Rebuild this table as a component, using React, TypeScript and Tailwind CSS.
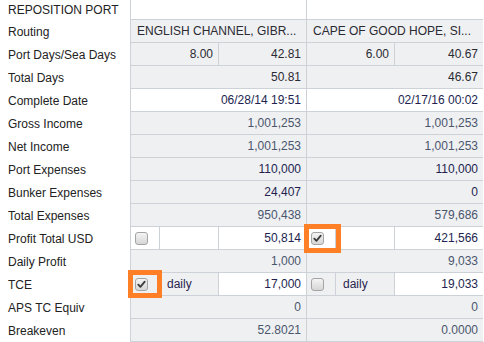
import React from 'react'

type Tone = 'dark' | 'calc' | 'edit'

const toneClass: Record<Tone, string> = {
  dark: 'text-[#2b2b33]',
  calc: 'text-[#4a566d]',
  edit: 'text-[#231f4f]',
}

function Checkbox({ checked }: { checked?: boolean }) {
  return (
    <span className="relative inline-flex h-[13px] w-[13px] items-center justify-center rounded-[3px] border border-[#a4a4a4] bg-gradient-to-b from-[#f4f4f4] to-[#d6d6d6]">
      {checked && (
        <svg viewBox="0 0 10 10" className="h-[9px] w-[9px]">
          <path d="M1.5 5.2 L3.8 7.6 L8.6 1.8" fill="none" stroke="#3b3b3b" strokeWidth="2" strokeLinecap="round" strokeLinejoin="round" />
        </svg>
      )}
    </span>
  )
}

function Label({ children }: { children?: React.ReactNode }) {
  return <div className="flex w-[130px] shrink-0 items-center pl-2 text-[#222]">{children}</div>
}

function Value({ text, tone = 'dark', white, w }: { text: string; tone?: Tone; white?: boolean; w?: string }) {
  return (
    <div
      className={`flex h-full items-center justify-end pr-[5px] ${w ?? 'flex-1'} ${white ? 'bg-white' : 'bg-[#eff0f2]'} ${toneClass[tone]}`}
    >
      {text}
    </div>
  )
}

function Row({ label, children, first }: { label: string; children: React.ReactNode; first?: boolean }) {
  return (
    <div className={`flex ${first ? 'h-[20px]' : 'h-[23px]'}`}>
      <Label>{label}</Label>
      <div className="flex flex-1 border-l border-[#cdd2d9]">{children}</div>
    </div>
  )
}

function Col({ children, last }: { children: React.ReactNode; last?: boolean }) {
  return (
    <div className={`flex w-[176px] shrink-0 border-b border-[#cdd2d9] ${last ? '' : 'border-r'} divide-x divide-[#cdd2d9]`}>
      {children}
    </div>
  )
}

function Pair({ a, b, tone, white }: { a: string; b: string; tone?: Tone; white?: boolean }) {
  return (
    <>
      <Col>
        <Value text={a} tone={tone} white={white} />
      </Col>
      <Col last>
        <Value text={b} tone={tone} white={white} />
      </Col>
    </>
  )
}

function Route({ text, last }: { text: string; last?: boolean }) {
  return (
    <Col last={last}>
      <div className="flex h-full min-w-0 flex-1 items-center bg-[#eff0f2] pl-[6px] pr-[4px] text-[#2b2b33]">
        <span className="truncate">{text}</span>
      </div>
    </Col>
  )
}

function CheckCol({ checked, daily, value, tone, valueWhite, boxWhite, last }: {
  checked?: boolean
  daily?: boolean
  value: string
  tone?: Tone
  valueWhite?: boolean
  boxWhite?: boolean
  last?: boolean
}) {
  return (
    <Col last={last}>
      <div className={`flex h-full w-[29px] shrink-0 items-center pl-[4px] ${boxWhite ? 'bg-white' : 'bg-[#eff0f2]'}`}>
        <Checkbox checked={checked} />
      </div>
      <div className={`flex h-full w-[59px] shrink-0 items-center pl-[7px] text-[#2a2550] ${boxWhite ? 'bg-white' : 'bg-[#eff0f2]'}`}>
        {daily ? 'daily' : ''}
      </div>
      <Value text={value} tone={tone} white={valueWhite} />
    </Col>
  )
}

export default function App() {
  return (
    <div
      className="relative h-[342px] w-[484px] overflow-hidden bg-white text-[12px] leading-none"
      style={{ fontFamily: '"Liberation Sans", Arial, sans-serif' }}
    >
      <Row label="REPOSITION PORT" first>
        <Col>
          <div className="flex-1 bg-white" />
        </Col>
        <Col last>
          <div className="flex-1 bg-white" />
        </Col>
      </Row>
      <Row label="Routing">
        <Route text="ENGLISH CHANNEL, GIBR..." />
        <Route text="CAPE OF GOOD HOPE, SI..." last />
      </Row>
      <Row label="Port Days/Sea Days">
        <Col>
          <Value text="8.00" w="w-[88px] shrink-0" />
          <Value text="42.81" />
        </Col>
        <Col last>
          <Value text="6.00" w="w-[88px] shrink-0" />
          <Value text="40.67" />
        </Col>
      </Row>
      <Row label="Total Days">
        <Pair a="50.81" b="46.67" />
      </Row>
      <Row label="Complete Date">
        <Pair a="06/28/14 19:51" b="02/17/16 00:02" white tone="edit" />
      </Row>
      <Row label="Gross Income">
        <Pair a="1,001,253" b="1,001,253" tone="calc" />
      </Row>
      <Row label="Net Income">
        <Pair a="1,001,253" b="1,001,253" tone="calc" />
      </Row>
      <Row label="Port Expenses">
        <Pair a="110,000" b="110,000" tone="edit" />
      </Row>
      <Row label="Bunker Expenses">
        <Pair a="24,407" b="0" tone="edit" />
      </Row>
      <Row label="Total Expenses">
        <Pair a="950,438" b="579,686" tone="calc" />
      </Row>
      <Row label="Profit Total USD">
        <CheckCol value="50,814" tone="edit" valueWhite boxWhite />
        <CheckCol checked value="421,566" tone="edit" valueWhite boxWhite last />
      </Row>
      <Row label="Daily Profit">
        <Pair a="1,000" b="9,033" tone="calc" />
      </Row>
      <Row label="TCE">
        <CheckCol checked daily value="17,000" tone="edit" valueWhite />
        <CheckCol daily value="19,033" tone="edit" valueWhite last />
      </Row>
      <Row label="APS TC Equiv">
        <Pair a="0" b="0" tone="calc" />
      </Row>
      <Row label="Breakeven">
        <Pair a="52.8021" b="0.0000" tone="calc" />
      </Row>

      <div className="pointer-events-none absolute left-[304px] top-[224px] h-[29px] w-[37px] border-[5px] border-[#ff7f27]" />
      <div className="pointer-events-none absolute left-[128px] top-[270px] h-[28px] w-[34px] border-[5px] border-[#ff7f27]" />
    </div>
  )
}
